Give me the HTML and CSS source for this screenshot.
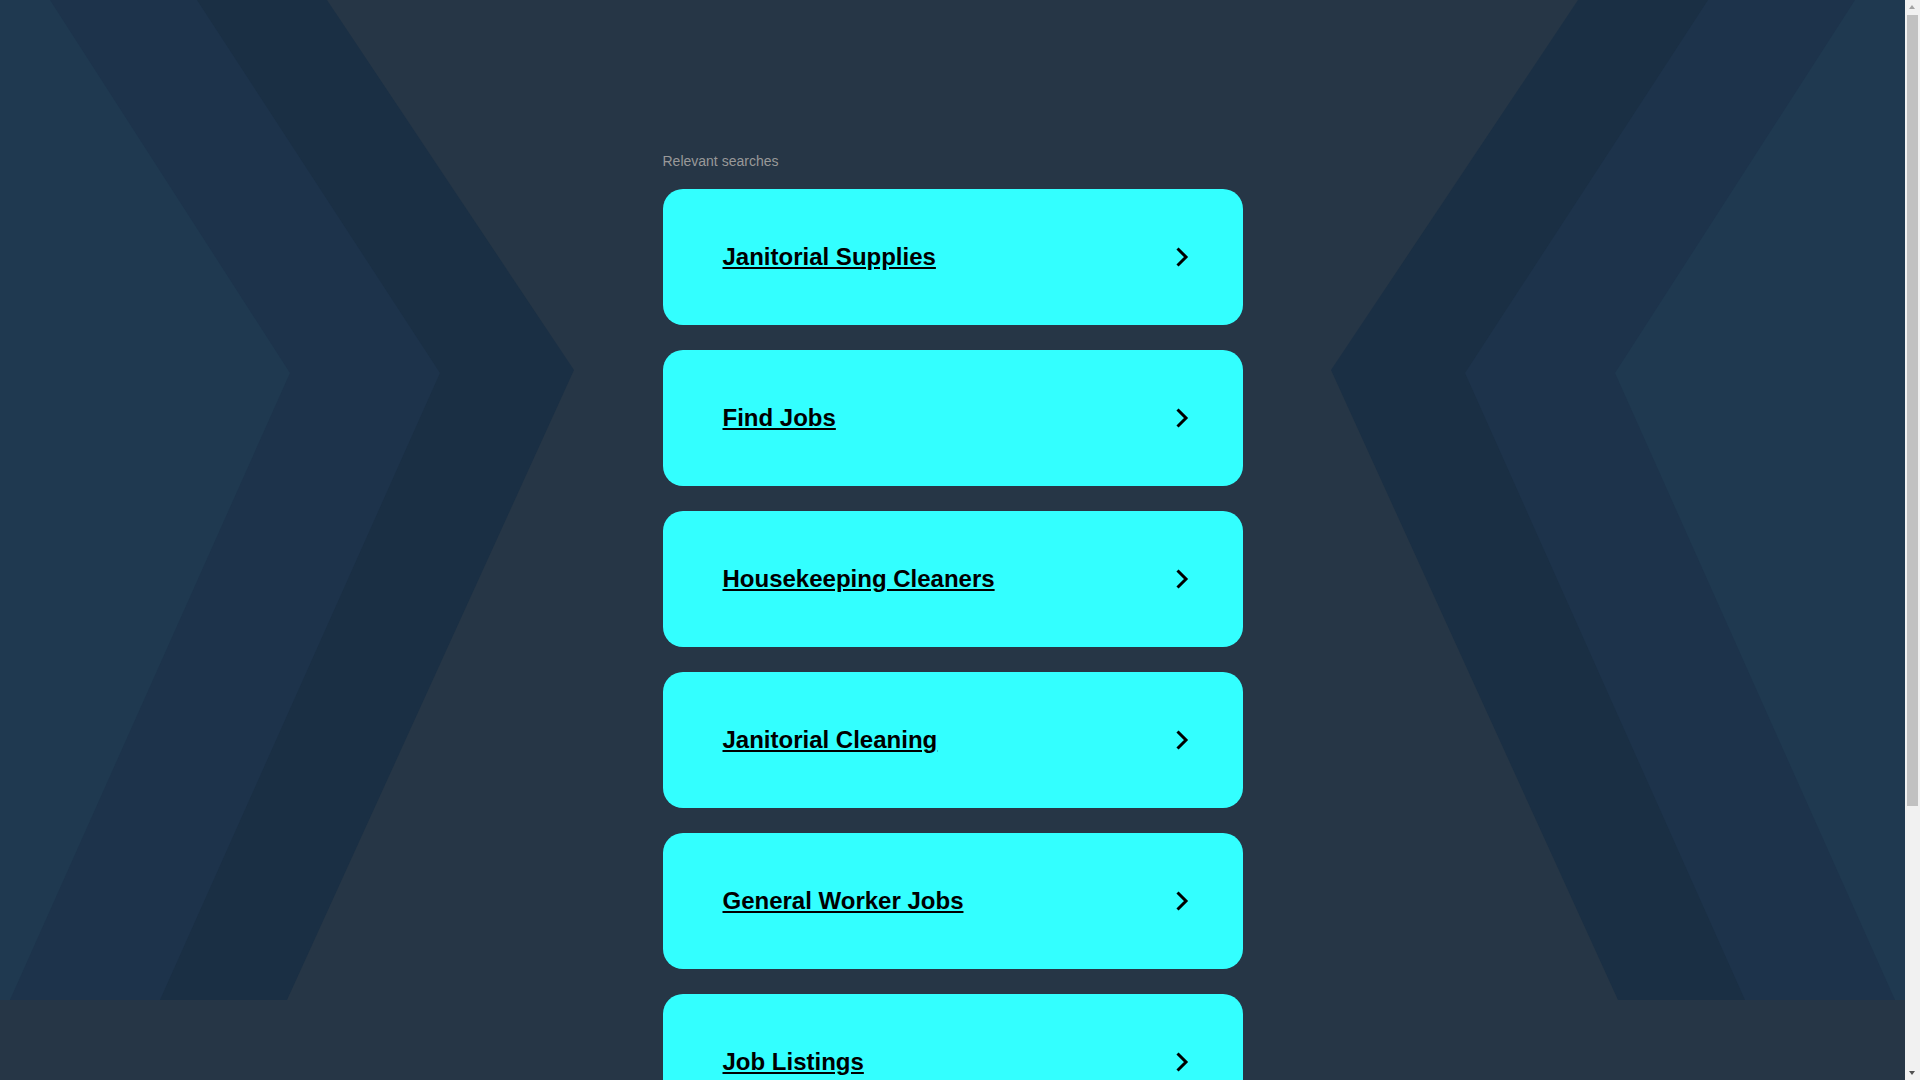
FILE: index.html
```html
<!DOCTYPE html>
<html lang="en">
<head>
    <meta charset="UTF-8">
    <meta name="viewport" content="width=device-width, initial-scale=1.0">
    <title>Relevant searches</title>
    <link rel="stylesheet" href="styles.css">
</head>
<body>
    <!-- background chevrons -->
    <svg class="backdrop" viewBox="0 0 1905 1000" preserveAspectRatio="none" aria-hidden="true">
        <polygon class="band-dark" points="0,0 327,0 574,370 287,1000 0,1000"/>
        <polygon class="band-mid" points="0,0 197,0 440,373 160,1000 0,1000"/>
        <polygon class="band-light" points="0,0 50,0 290,373 10,1000 0,1000"/>
        <polygon class="band-dark" points="1905,0 1578,0 1331,370 1618,1000 1905,1000"/>
        <polygon class="band-mid" points="1905,0 1708,0 1465,373 1745,1000 1905,1000"/>
        <polygon class="band-light" points="1905,0 1855,0 1615,373 1895,1000 1905,1000"/>
    </svg>

    <main class="page">
        <section class="searches">
            <p class="searches-title">Relevant searches</p>
            <ul class="search-list">
                <li>
                    <a class="search-card" href="#">
                        <span class="search-label">Janitorial Supplies</span>
                        <svg class="chevron" viewBox="0 0 14 22"><polyline points="2.5,2.5 11,11 2.5,19.5"/></svg>
                    </a>
                </li>
                <li>
                    <a class="search-card" href="#">
                        <span class="search-label">Find Jobs</span>
                        <svg class="chevron" viewBox="0 0 14 22"><polyline points="2.5,2.5 11,11 2.5,19.5"/></svg>
                    </a>
                </li>
                <li>
                    <a class="search-card" href="#">
                        <span class="search-label">Housekeeping Cleaners</span>
                        <svg class="chevron" viewBox="0 0 14 22"><polyline points="2.5,2.5 11,11 2.5,19.5"/></svg>
                    </a>
                </li>
                <li>
                    <a class="search-card" href="#">
                        <span class="search-label">Janitorial Cleaning</span>
                        <svg class="chevron" viewBox="0 0 14 22"><polyline points="2.5,2.5 11,11 2.5,19.5"/></svg>
                    </a>
                </li>
                <li>
                    <a class="search-card" href="#">
                        <span class="search-label">General Worker Jobs</span>
                        <svg class="chevron" viewBox="0 0 14 22"><polyline points="2.5,2.5 11,11 2.5,19.5"/></svg>
                    </a>
                </li>
                <li>
                    <a class="search-card" href="#">
                        <span class="search-label">Job Listings</span>
                        <svg class="chevron" viewBox="0 0 14 22"><polyline points="2.5,2.5 11,11 2.5,19.5"/></svg>
                    </a>
                </li>
            </ul>
        </section>
    </main>

    <!-- window scrollbar -->
    <div class="scrollbar" aria-hidden="true">
        <div class="scrollbar-thumb"></div>
    </div>
</body>
</html>
```

FILE: styles.css
```css
* {
    margin: 0;
    padding: 0;
    box-sizing: border-box;
}

body {
    position: relative;
    margin-right: 15px;
    font-family: 'Liberation Sans', Arial, sans-serif;
    background: #263646;
    color: #000;
}

.backdrop {
    position: absolute;
    top: 0;
    left: 0;
    width: 100%;
    height: 1000px;
    z-index: 0;
}

.band-dark {
    fill: #1a2f44;
}

.band-mid {
    fill: #1d334b;
}

.band-light {
    fill: #1f3950;
}

.page {
    position: relative;
    z-index: 1;
    width: 580px;
    margin: 0 auto;
    padding: 153px 0 304px;
}

.searches-title {
    font-size: 14px;
    line-height: 16px;
    color: #999;
    margin-bottom: 20px;
}

.search-list {
    list-style: none;
    display: flex;
    flex-direction: column;
    gap: 25px;
}

.search-card {
    display: flex;
    justify-content: space-between;
    align-items: center;
    height: 136px;
    padding: 0 54px 0 60px;
    background: #33ffff;
    border-radius: 20px;
    color: #000;
    text-decoration: none;
}

.search-label {
    font-size: 24px;
    font-weight: bold;
    line-height: 28px;
    text-decoration: underline;
}

.chevron {
    width: 14px;
    height: 22px;
    fill: none;
    stroke: #000;
    stroke-width: 3;
}

.scrollbar {
    position: fixed;
    top: 0;
    right: 0;
    width: 15px;
    height: 100vh;
    background: #f1f1f1;
    padding: 15px 2px;
    z-index: 2;
}

.scrollbar::before,
.scrollbar::after {
    content: "";
    position: absolute;
    left: 4px;
    border-left: 3.5px solid transparent;
    border-right: 3.5px solid transparent;
}

.scrollbar::before {
    top: 5px;
    border-bottom: 4px solid #a3a3a3;
}

.scrollbar::after {
    bottom: 5px;
    border-top: 4px solid #505050;
}

.scrollbar-thumb {
    height: 791px;
    background: #c1c1c1;
}
```
